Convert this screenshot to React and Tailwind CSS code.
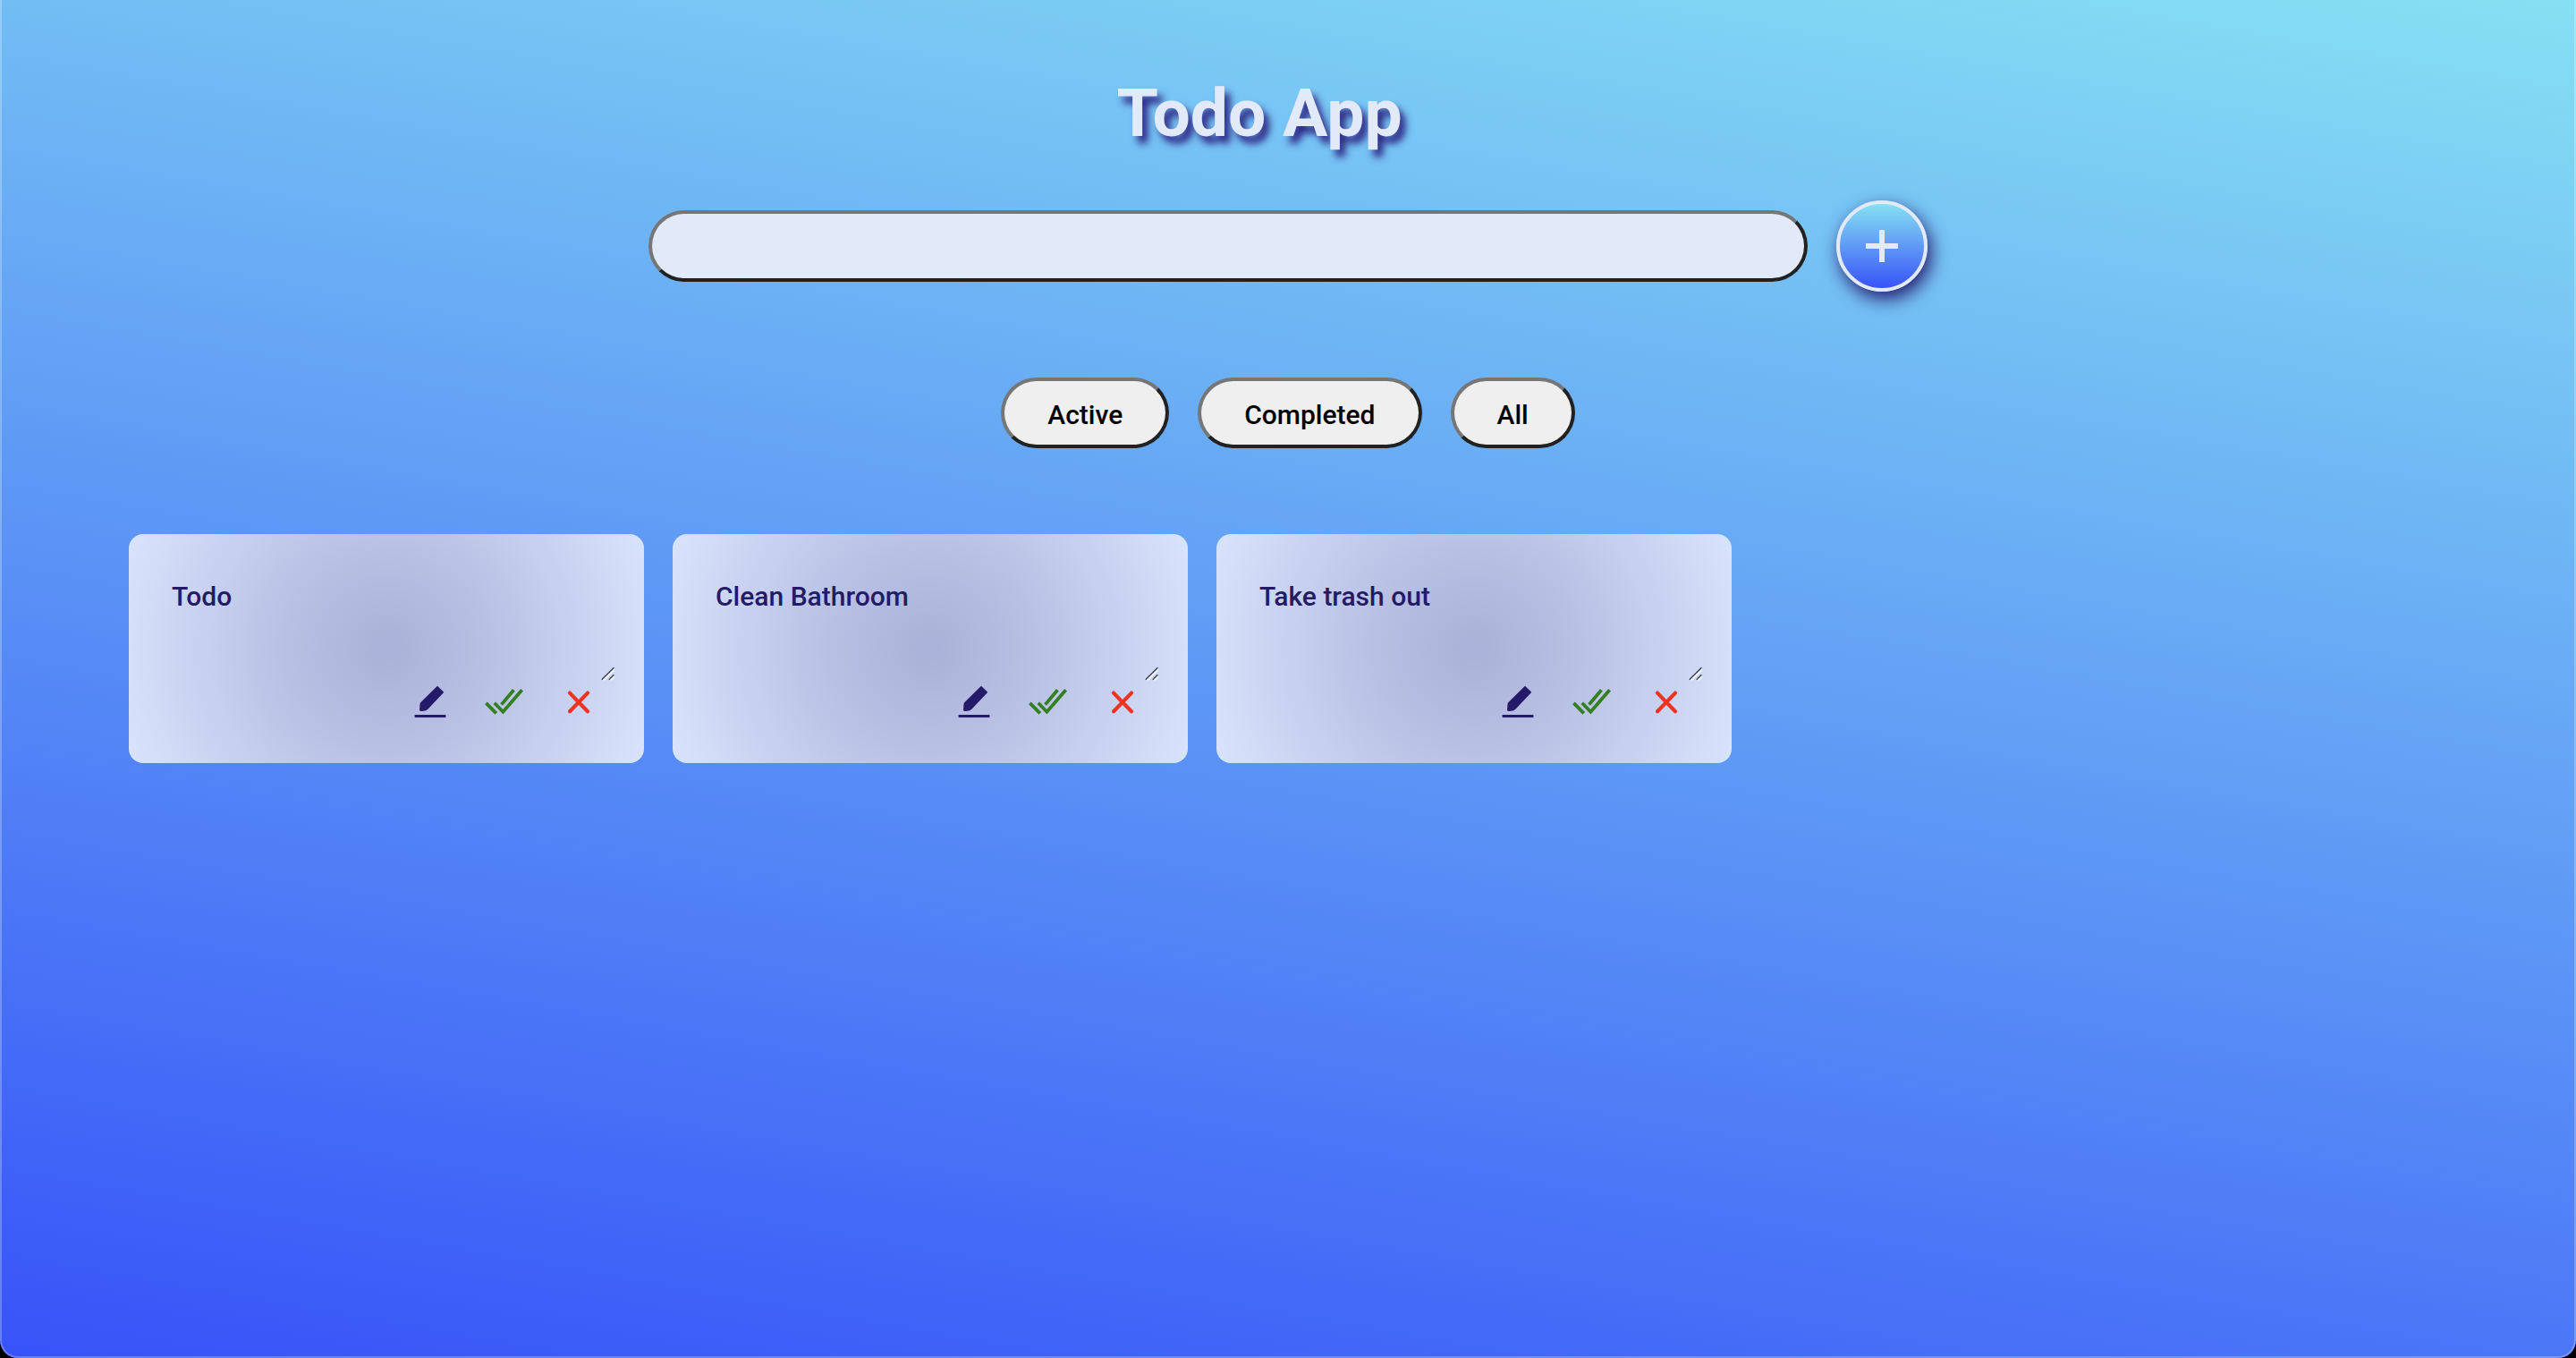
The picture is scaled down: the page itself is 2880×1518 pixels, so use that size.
const todos = ["Todo", "Clean Bathroom", "Take trash out"];
const filters = ["Active", "Completed", "All"];

function EditIcon() {
  return (
    <svg viewBox="0 0 40 40" className="size-10" fill="currentColor" aria-hidden="true">
      <path d="M28 1.7 35.3 8.8 17.6 27.4Q15.6 29.6 12.4 29.8L9.4 30Q8 30 8.1 28.6L8.4 22.8Q8.5 21 9.7 19.8Z" />
      <path d="M2.6 34H37.4V37H2.6Z" />
    </svg>
  );
}

function DoubleCheckIcon() {
  return (
    <svg viewBox="0 0 48 40" className="h-10 w-12" fill="none" stroke="currentColor" strokeWidth="3.8" aria-hidden="true">
      <path d="M3.4 20.8 14.8 32.4M12.8 20.8 22.4 30.8 43.6 6.2M20.6 22.6 34.4 6.2" />
    </svg>
  );
}

function CrossIcon() {
  return (
    <svg viewBox="0 0 40 40" className="size-10" fill="none" stroke="currentColor" strokeWidth="4.2" strokeLinecap="round" aria-hidden="true">
      <path d="M10 9.6 30 30.2M30 9.6 10 30.2" />
    </svg>
  );
}

function ResizeGrip() {
  return (
    <svg viewBox="0 0 16 16" className="pointer-events-none absolute right-0 bottom-0 size-4" fill="none" strokeWidth="1.4" aria-hidden="true">
      <path d="M2.5 15.5 14.6 3.4M10.5 15.5 14.6 11.4" stroke="#ffffff" />
      <path d="M0.8 14.8 14.4 1.2M8.8 14.8 14.4 9.2" stroke="#3f414b" />
    </svg>
  );
}

function TodoCard({ text }) {
  const action = "flex w-[51px] justify-center";
  return (
    <li className="w-[20vw] rounded-2xl bg-[radial-gradient(circle,#a9b1d8_0%,#b8c0e4_36%,#d8e4fc_100%)] pt-8 pb-12">
      <div className="relative mx-8 h-33">
        <textarea
          aria-label={text}
          defaultValue={text}
          className="block h-full w-full resize-none bg-transparent px-4 py-4 text-[30px] leading-11 font-medium text-[#241a68] outline-none"
        />
        <ResizeGrip />
      </div>
      <div className="flex justify-end gap-8 pt-1 pr-12">
        <button type="button" aria-label="Edit" className={`${action} text-[#241a68]`}>
          <EditIcon />
        </button>
        <button type="button" aria-label="Complete" className={`${action} text-[#347f21]`}>
          <DoubleCheckIcon />
        </button>
        <button type="button" aria-label="Delete" className={`${action} text-[#ee3322]`}>
          <CrossIcon />
        </button>
      </div>
    </li>
  );
}

export default function App() {
  return (
    <div className="bg-black font-['Roboto',sans-serif]">
      <div className="relative min-h-screen rounded-b-[20px] bg-[linear-gradient(190deg,#86e0f3,#3753f8)]">
        <div className="pointer-events-none absolute inset-0 rounded-b-[20px] border-x-2 border-b-2 border-white/25" />
        <header className="flex justify-center pt-[78px]">
          <h1 className="pr-16 text-[75px] leading-[96px] font-bold text-[#e2eafa] [text-shadow:6px_8px_8px_#2b2080]">Todo App</h1>
        </header>
        <form className="mt-[50px] flex items-center justify-center gap-8" onSubmit={(e) => e.preventDefault()}>
          <input
            type="text"
            aria-label="New todo"
            className="h-20 w-[45%] rounded-full border-4 border-t-[#767676] border-r-[#212121] border-b-[#212121] border-l-[#767676] bg-[#e2eafa] px-10 text-[30px] outline-none"
          />
          <button
            type="submit"
            aria-label="Add"
            className="flex size-[102px] items-center justify-center rounded-full border-4 border-[#e2eafa] bg-[linear-gradient(180deg,#86e0f3,#3753f8)] text-[#e2eafa] shadow-[4px_8px_20px_#251a6e]"
          >
            <svg viewBox="0 0 36 36" className="size-9" fill="currentColor" aria-hidden="true">
              <path d="M15 0h6v15h15v6H21v15h-6V21H0v-6h15z" />
            </svg>
          </button>
        </form>
        <nav className="mt-24 flex justify-center gap-8">
          {filters.map((name) => (
            <button
              key={name}
              type="button"
              className="h-[79px] rounded-[40px] border-4 border-t-[#767676] border-r-[#212121] border-b-[#212121] border-l-[#767676] bg-[#efefef] px-12 pt-1 text-[30px] font-medium text-black"
            >
              {name}
            </button>
          ))}
        </nav>
        <ul className="mt-24 flex flex-wrap gap-8 px-[5%]">
          {todos.map((t) => (
            <TodoCard key={t} text={t} />
          ))}
        </ul>
      </div>
    </div>
  );
}
